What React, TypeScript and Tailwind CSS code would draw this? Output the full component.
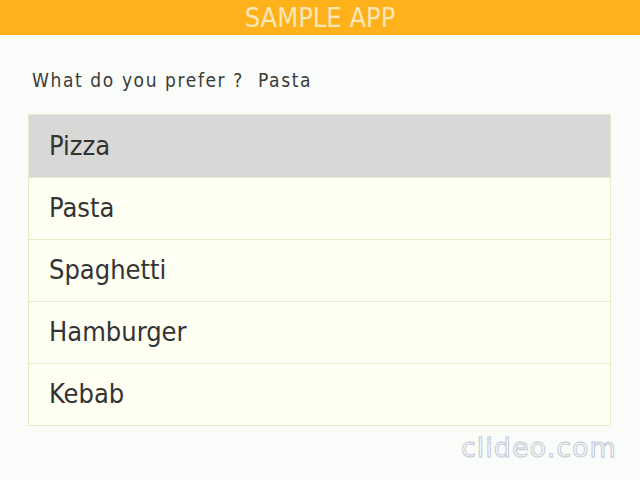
import React, { useState } from 'react';

const foods = ['Pizza', 'Pasta', 'Spaghetti', 'Hamburger', 'Kebab'];

export default function App() {
  const [hovered] = useState('Pizza');
  const [choice, setChoice] = useState('Pasta');

  return (
    <div className="h-[480px] w-[640px] overflow-hidden bg-[#fafcf9] font-['DejaVu_Sans_Condensed','DejaVu_Sans',sans-serif] relative">
      {/* Header */}
      <div className="flex h-[35px] items-center justify-center bg-[#ffb11c]">
        <span className="text-[27px] leading-none text-[#fde7b8]">SAMPLE APP</span>
      </div>

      <div className="px-[28px]">
        <p className="mt-[32px] pl-[4px] text-[19px] leading-[26px] tracking-[1.6px] text-[#3a3a3a]">
          What do you prefer ?&nbsp; {choice}
        </p>

        {/* List */}
        <ul className="mt-[21px] w-[583px] border border-[#e6ecc8] bg-[#fffff4]">
          {foods.map((food, i) => (
            <li
              key={food}
              onClick={() => setChoice(food)}
              className={
                'flex h-[62px] items-center pl-[20px] text-[27px] text-[#333333] ' +
                (i > 0 ? 'border-t border-[#e6ecc8] ' : '') +
                (food === hovered ? 'bg-[#d8d8d6]' : '')
              }
            >
              {food}
            </li>
          ))}
        </ul>
      </div>

      {/* watermark */}
      <span className="absolute left-[461px] top-[432px] font-['DejaVu_Sans',sans-serif] text-[27px] leading-[32px] tracking-[1px] text-transparent [-webkit-text-stroke:1px_#c4c8d6]">
        clideo.com
      </span>
    </div>
  );
}
